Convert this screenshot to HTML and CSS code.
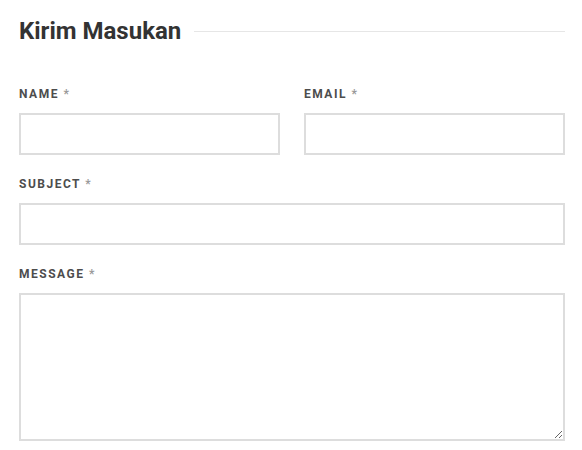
FILE: index.html
```html
<!DOCTYPE html>
<html lang="id">
<head>
<meta charset="utf-8">
<title>Kirim Masukan</title>
<link rel="stylesheet" href="styles.css">
</head>
<body>
<section class="feedback">
  <div class="title-row">
    <h2 class="title">Kirim Masukan</h2>
    <span class="title-line"></span>
  </div>
  <form class="form">
    <div class="row two">
      <div class="field">
        <label class="label" for="name">Name <span class="req">*</span></label>
        <input class="input" id="name" type="text">
      </div>
      <div class="field">
        <label class="label" for="email">Email <span class="req">*</span></label>
        <input class="input" id="email" type="email">
      </div>
    </div>
    <div class="row">
      <div class="field">
        <label class="label" for="subject">Subject <span class="req">*</span></label>
        <input class="input" id="subject" type="text">
      </div>
    </div>
    <div class="row">
      <div class="field">
        <label class="label" for="message">Message <span class="req">*</span></label>
        <textarea class="input textarea" id="message"></textarea>
      </div>
    </div>
  </form>
</section>
</body>
</html>
```
FILE: styles.css
```css
* { box-sizing: border-box; }
html, body { margin: 0; padding: 0; background: #fff; }
body { font-family: Roboto, "Liberation Sans", sans-serif; }

.feedback {
  width: 546px;
  margin-left: 19px;
  padding-top: 16px;
}

.title-row {
  display: flex;
  align-items: center;
  gap: 13px;
  height: 30px;
}
.title {
  margin: 0;
  font-size: 24px;
  line-height: 30px;
  font-weight: 700;
  color: #333;
  white-space: nowrap;
}
.title-line {
  flex: 1;
  height: 1px;
  background: #e6e6e6;
  margin-top: 1px;
}

.form { margin-top: 39px; }

.row { margin-bottom: 20px; }
.row.two {
  display: grid;
  grid-template-columns: 1fr 1fr;
  column-gap: 24px;
}
.field { display: flex; flex-direction: column; }

.label {
  display: block;
  font-size: 12px;
  line-height: 18px;
  font-weight: 700;
  letter-spacing: 1.5px;
  text-transform: uppercase;
  color: #4d4d4d;
  margin-bottom: 10px;
}
.req { color: #999; }

.input {
  display: block;
  width: 100%;
  height: 42px;
  border: 2px solid #dddddd;
  border-radius: 0;
  background: #fff;
  padding: 8px 12px;
  font: 14px Roboto, sans-serif;
  outline: none;
  margin: 0;
}
.textarea {
  height: 148px;
  resize: vertical;
}
```
